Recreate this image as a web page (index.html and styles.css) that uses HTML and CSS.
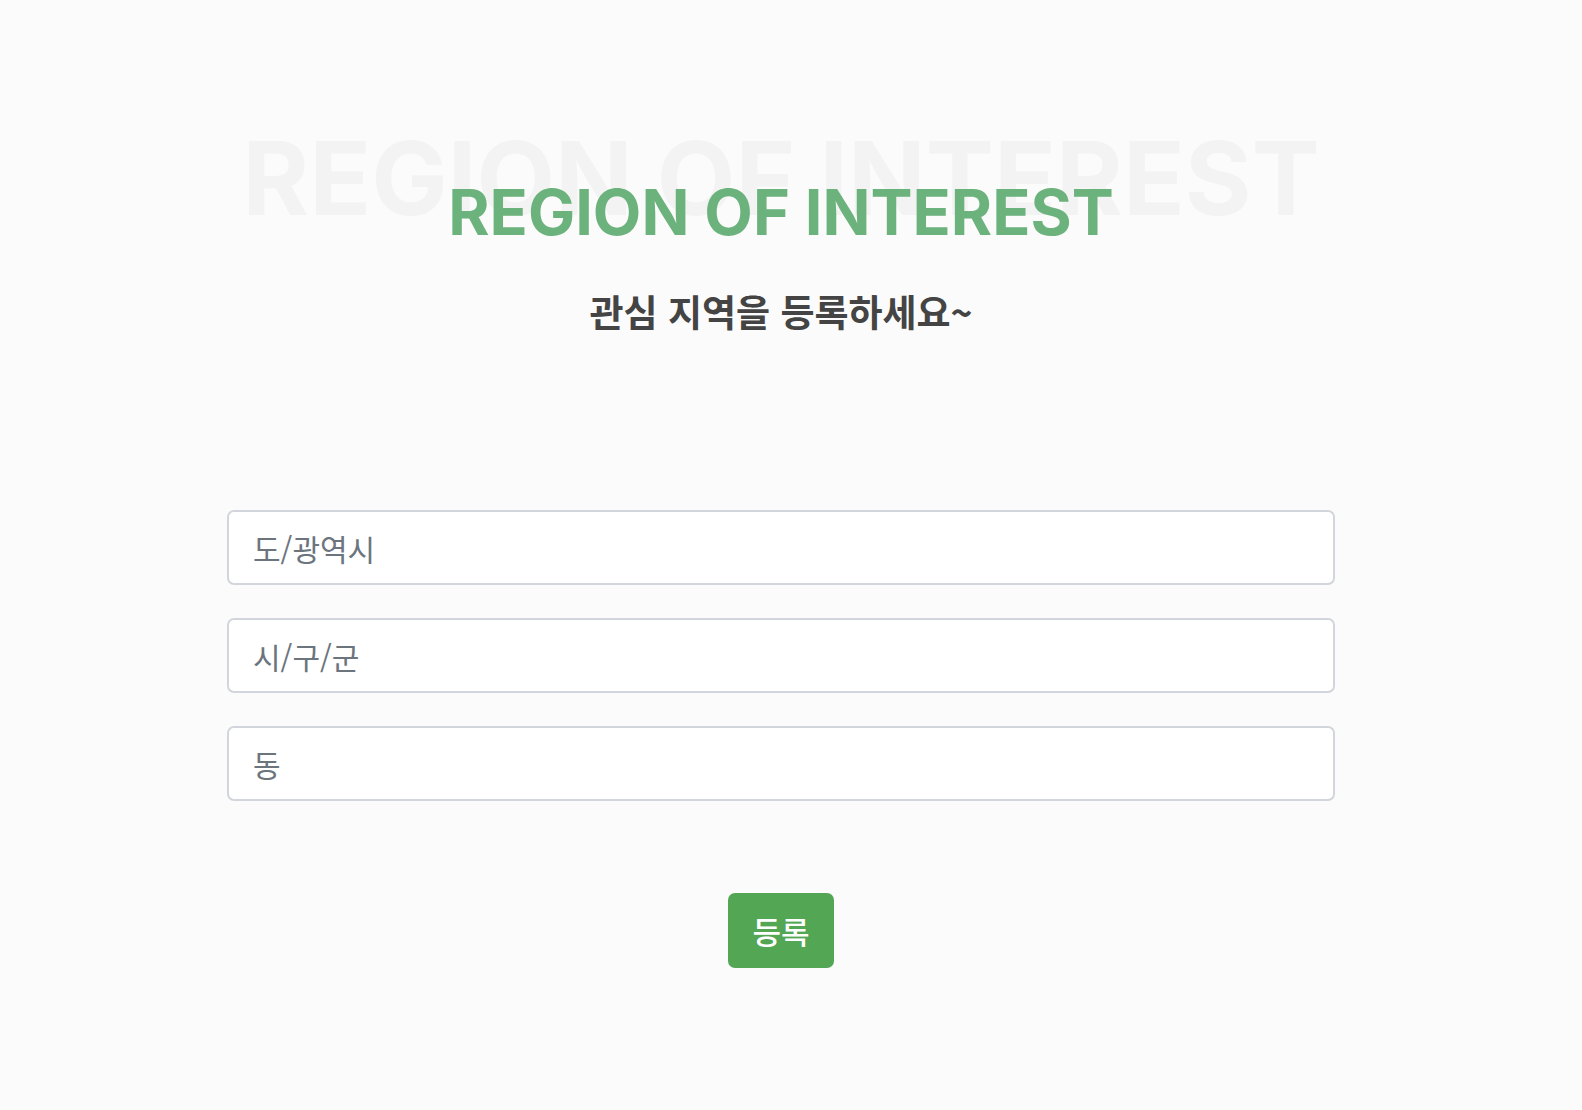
FILE: index.html
```html
<!DOCTYPE html>
<html lang="ko">
<head>
<meta charset="utf-8">
<title>관심 지역 등록</title>
<link rel="stylesheet" href="styles.css">
</head>
<body>
<main class="page">
  <header class="hero">
    <div class="hero-bg" aria-hidden="true">REGION OF INTEREST</div>
    <h1 class="hero-title">REGION OF INTEREST</h1>
    <p class="hero-sub">관심 지역을 등록하세요~</p>
  </header>
  <form class="region-form">
    <input class="field" type="text" placeholder="도/광역시">
    <input class="field" type="text" placeholder="시/구/군">
    <input class="field" type="text" placeholder="동">
    <div class="actions">
      <button class="btn-submit" type="button">등록</button>
    </div>
  </form>
</main>
</body>
</html>
```
FILE: styles.css
```css
* { box-sizing: border-box; }
html, body { margin: 0; padding: 0; }
body {
  background: #fafbfa;
  font-family: "Noto Sans CJK KR", "Noto Sans", sans-serif;
  width: 1582px;
  height: 1110px;
  overflow: hidden;
}
.page {
  width: 1562px;
  display: flex;
  flex-direction: column;
  align-items: center;
  padding-top: 127px;
}
.hero {
  position: relative;
  display: flex;
  flex-direction: column;
  align-items: center;
  width: 100%;
}
.hero-bg {
  position: absolute;
  top: 0;
  left: 0;
  right: 0;
  text-align: center;
  font-family: "Inter", "Liberation Sans", sans-serif;
  font-weight: 700;
  font-size: 102px;
  line-height: 1;
  color: #f2f3f2;
  white-space: nowrap;
}
.hero-title {
  position: relative;
  margin: 54px 0 0;
  font-family: "Inter", "Liberation Sans", sans-serif;
  font-weight: 700;
  font-size: 63px;
  line-height: 1;
  color: #6bb27c;
}
.hero-sub {
  margin: 45px 0 0;
  font-size: 37px;
  font-weight: 700;
  color: #444;
  line-height: 1.2;
}
.region-form {
  margin-top: 177px;
  width: 1108px;
  display: flex;
  flex-direction: column;
  gap: 33px;
}
.field {
  height: 75px;
  width: 100%;
  border: 2px solid #d2d6dc;
  border-radius: 7px;
  background: #fff;
  padding: 0 24px;
  font-family: "Noto Sans CJK KR", sans-serif;
  font-size: 30px;
  color: #495057;
  outline: none;
}
.field::placeholder { color: #6c757d; }
.actions {
  display: flex;
  justify-content: center;
  margin-top: 59px;
}
.btn-submit {
  width: 106px;
  height: 75px;
  border: 0;
  border-radius: 7px;
  background: #53a653;
  color: #fff;
  font-family: "Noto Sans CJK KR", sans-serif;
  font-size: 31px;
  font-weight: 500;
  cursor: pointer;
}
```
